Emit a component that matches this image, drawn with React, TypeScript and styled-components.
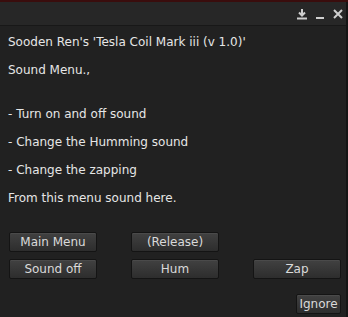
import { createGlobalStyle, styled } from "styled-components";

const GlobalStyle = createGlobalStyle`
  html, body {
    margin: 0;
    padding: 0;
    background: #141414;
  }
  body {
    font-family: "DejaVu Sans", "Liberation Sans", sans-serif;
  }
`;

const Desktop = styled.div`
  width: 348px;
  height: 317px;
  background: linear-gradient(#3a0d0d, #3a0d0d 2px, #151515 2px);
  overflow: hidden;
`;

const Window = styled.div`
  width: 346px;
  height: 315px;
  margin-top: 2px;
  background: #212121;
  border-top-right-radius: 4px;
  display: flex;
  flex-direction: column;
`;

const TitleBar = styled.div`
  height: 23px;
  background: #272727;
  border-bottom: 1px solid #181818;
  display: flex;
  align-items: center;
  justify-content: flex-end;
  gap: 6px;
  padding-right: 2px;
`;

const TitleIcon = styled.svg`
  width: 12px;
  height: 12px;
  display: block;
`;

const Message = styled.div`
  padding: 9px 8px 0 8px;
  color: #e6e6e6;
  font-size: 12px;
  line-height: 14px;
`;

const Line = styled.div<{ $gap: number }>`
  margin-top: ${(p) => p.$gap}px;
  white-space: nowrap;
`;

const ButtonGrid = styled.div`
  display: grid;
  grid-template-columns: repeat(3, 88px);
  column-gap: 34px;
  row-gap: 7px;
  padding: 27px 0 0 9px;
`;

const DialogButton = styled.div<{ $col?: number }>`
  grid-column: ${(p) => p.$col ?? "auto"};
  height: 18px;
  border: 1px solid #141414;
  border-radius: 2px;
  background: linear-gradient(#414141, #2d2d2d);
  box-shadow: inset 0 1px 0 #4a4a4a;
  color: #dadada;
  font-size: 12px;
  display: flex;
  align-items: center;
  justify-content: center;
`;

const Footer = styled.div`
  display: flex;
  justify-content: flex-end;
  padding: 15px 5px 0 0;
`;

const IgnoreButton = styled(DialogButton)`
  width: 43px;
`;

export default function App() {
  return (
    <Desktop>
      <GlobalStyle />
      <Window>
        <TitleBar>
          <TitleIcon viewBox="0 0 12 12">
            <path d="M6 1v6M3 4.5l3 3 3-3" stroke="#cfcfcf" strokeWidth="2" fill="none" />
            <rect x="1" y="9.5" width="10" height="2" fill="#cfcfcf" />
          </TitleIcon>
          <TitleIcon viewBox="0 0 12 12">
            <rect x="2" y="9" width="8" height="2" fill="#cfcfcf" />
          </TitleIcon>
          <TitleIcon viewBox="0 0 12 12">
            <path d="M2 2l8 8M10 2l-8 8" stroke="#cfcfcf" strokeWidth="2" />
          </TitleIcon>
        </TitleBar>
        <Message>
          <Line $gap={0}>Sooden Ren's 'Tesla Coil Mark iii (v 1.0)'</Line>
          <Line $gap={14}>Sound Menu.,</Line>
          <Line $gap={30}>- Turn on and off sound</Line>
          <Line $gap={14}>- Change the Humming sound</Line>
          <Line $gap={14}>- Change the zapping</Line>
          <Line $gap={14}>From this menu sound here.</Line>
        </Message>
        <ButtonGrid>
          <DialogButton>Main Menu</DialogButton>
          <DialogButton>(Release)</DialogButton>
          <DialogButton $col={1}>Sound off</DialogButton>
          <DialogButton>Hum</DialogButton>
          <DialogButton>Zap</DialogButton>
        </ButtonGrid>
        <Footer>
          <IgnoreButton>Ignore</IgnoreButton>
        </Footer>
      </Window>
    </Desktop>
  );
}
